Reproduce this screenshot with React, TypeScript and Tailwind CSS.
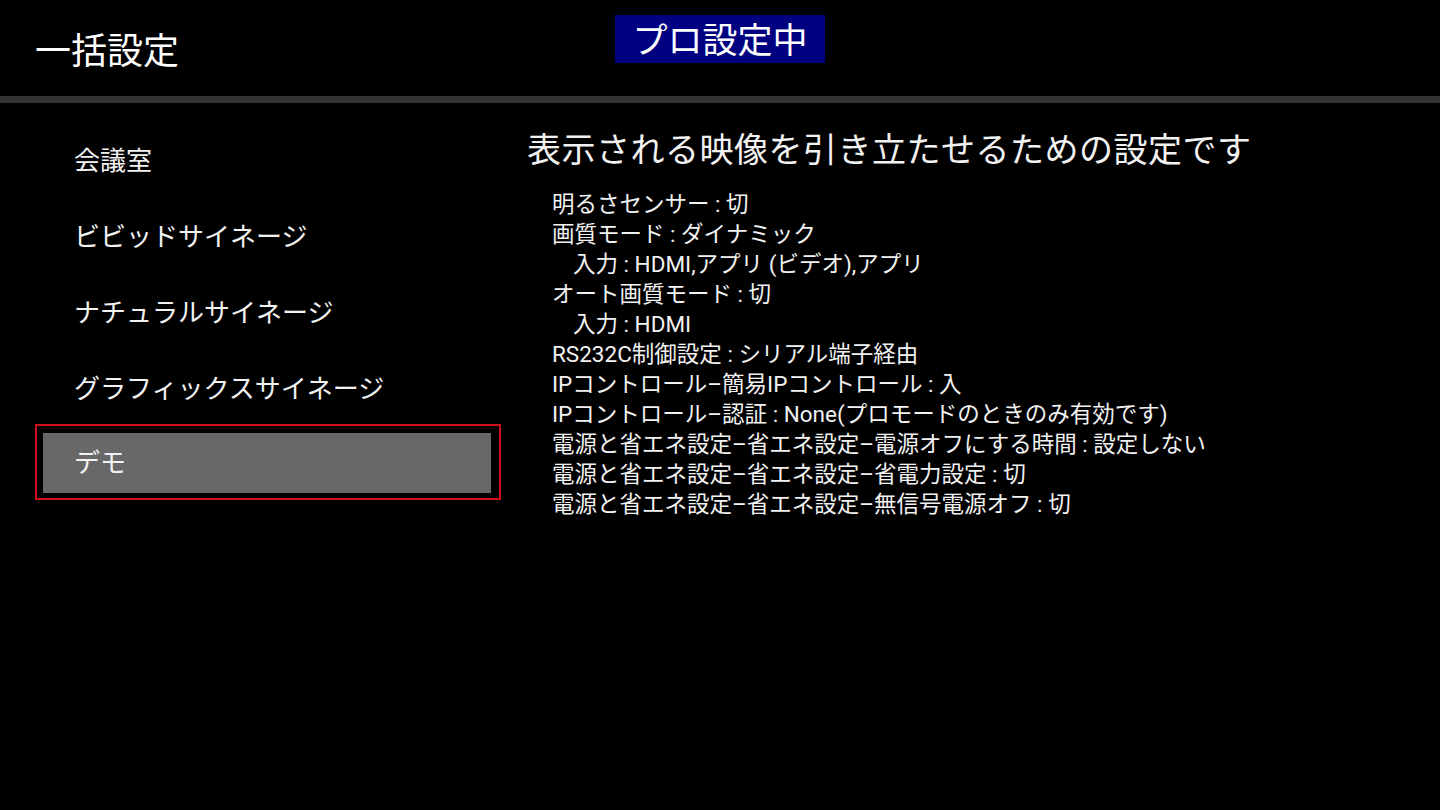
import React from "react";

const menu = ["会議室", "ビビッドサイネージ", "ナチュラルサイネージ", "グラフィックスサイネージ", "デモ"];

const lines: { text: string; indent?: boolean }[] = [
  { text: "明るさセンサー : 切" },
  { text: "画質モード : ダイナミック" },
  { text: "入力 : HDMI,アプリ (ビデオ),アプリ", indent: true },
  { text: "オート画質モード : 切" },
  { text: "入力 : HDMI", indent: true },
  { text: "RS232C制御設定 : シリアル端子経由" },
  { text: "IPコントロール–簡易IPコントロール : 入" },
  { text: "IPコントロール–認証 : None(プロモードのときのみ有効です)" },
  { text: "電源と省エネ設定–省エネ設定–電源オフにする時間 : 設定しない" },
  { text: "電源と省エネ設定–省エネ設定–省電力設定 : 切" },
  { text: "電源と省エネ設定–省エネ設定–無信号電源オフ : 切" },
];

export default function App() {
  return (
    <div
      className="w-[1440px] h-[810px] bg-black text-[#f2f2f2] overflow-hidden"
      style={{ fontFamily: "Roboto, 'Noto Sans CJK JP', sans-serif" }}
    >
      <header className="h-[96px] grid grid-cols-[1fr_auto_1fr]">
        <div className="pl-[35px] pt-[26px] text-[36px] leading-[44px] text-white" style={{ fontFamily: "'Noto Sans CJK JP', sans-serif" }}>
          一括設定
        </div>
        <div className="mt-[15px] h-[48px] w-[210px] bg-[#000080] flex items-center justify-center pb-[3px] text-[35px] leading-none text-white" style={{ fontFamily: "'Noto Sans CJK JP', sans-serif" }}>
          プロ設定中
        </div>
        <div />
      </header>
      <div className="h-[7px] bg-[#333333]" />
      <div className="flex">
        <div className="w-[501px] pl-[35px] pt-[17px] flex flex-col">
          {menu.map((m, i) => {
            const sel = i === menu.length - 1;
            return sel ? (
              <div key={m} className="h-[76px] border-2 border-[#d0101c] pl-[6px] pr-[8px] pt-[7px] pb-[5px]">
                <div className="h-full bg-[#686868] flex items-center pl-[31px] text-[26px]">{m}</div>
              </div>
            ) : (
              <div key={m} className="h-[76px] flex items-center pl-[39px] pt-[7px] text-[26px]">
                {m}
              </div>
            );
          })}
        </div>
        <div className="flex-1 pl-[26px] pt-[23px]">
          <div className="text-[34px] leading-[48px] tracking-[0.5px]">表示される映像を引き立たせるための設定です</div>
          <div className="mt-[15px] pl-[25px] text-[22.5px] leading-[30px]">
            {lines.map((l, i) => (
              <div key={i} className={l.indent ? "pl-[21px]" : ""}>
                {l.text}
              </div>
            ))}
          </div>
        </div>
      </div>
    </div>
  );
}
